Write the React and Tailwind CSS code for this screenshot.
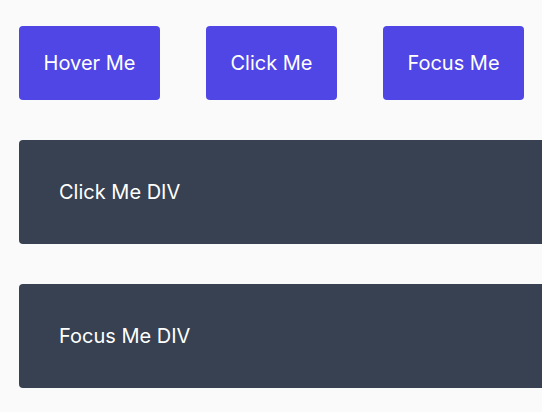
export default function App() {
  return (
    <div
      className="w-screen h-screen overflow-hidden bg-[#fafafa] pt-[26px] pl-[19px]"
      style={{ fontFamily: "Inter, 'Noto Sans', sans-serif" }}
    >
      <div className="flex gap-[46px]">
        <button className="bg-[#4f46e5] text-white text-[20px] leading-[28px] py-[23px] rounded-[4px] w-[141px] whitespace-nowrap text-center">
          Hover Me
        </button>
        <button className="bg-[#4f46e5] text-white text-[20px] leading-[28px] py-[23px] rounded-[4px] w-[131px] whitespace-nowrap text-center">
          Click Me
        </button>
        <button className="bg-[#4f46e5] text-white text-[20px] leading-[28px] py-[23px] rounded-[4px] w-[141px] whitespace-nowrap text-center">
          Focus Me
        </button>
      </div>
      <div className="mt-10 w-[600px] h-[104px] bg-[#374151] rounded-[4px] flex items-center px-10 text-white text-[20px] leading-[28px]">
        Click Me DIV
      </div>
      <div className="mt-10 w-[600px] h-[104px] bg-[#374151] rounded-[4px] flex items-center px-10 text-white text-[20px] leading-[28px]">
        Focus Me DIV
      </div>
    </div>
  );
}
